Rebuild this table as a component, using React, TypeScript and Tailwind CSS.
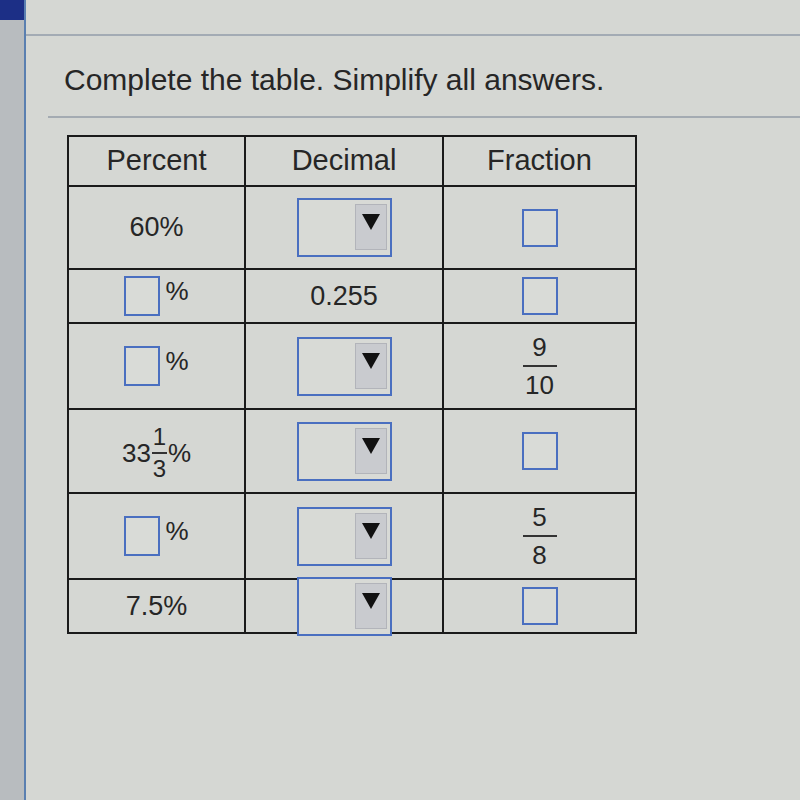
import React from "react";

const Box = ({ w = 36, h = 38 }: { w?: number; h?: number }) => (
  <div className="border-2 border-[#4a6fc0] bg-[#d9dbd7]" style={{ width: w, height: h }} />
);

const Dropdown = () => (
  <div className="w-[95px] h-[59px] border-2 border-[#4a6fc0] bg-[#d8dad6] flex justify-end items-stretch pt-[4px] pr-[3px] pb-[5px]">
    <div className="w-[32px] bg-[#c9cbcf] border border-[#b2b4ba] flex justify-center pt-[8px]">
      <svg width="20" height="18" viewBox="0 0 20 18">
        <polygon points="1,1 19,1 10,17" fill="#111" />
      </svg>
    </div>
  </div>
);

const PctBox = () => (
  <div className="flex items-start gap-[5px]">
    <Box w={36} h={40} />
    <span className="text-[26px] leading-[30px]">%</span>
  </div>
);

const Frac = ({ n, d }: { n: string; d: string }) => (
  <div className="flex flex-col items-center text-[26px] leading-[26px]">
    <span>{n}</span>
    <div className="w-[34px] h-[2px] bg-[#333] my-[5px]" />
    <span>{d}</span>
  </div>
);

const Cell = ({ children, h, last }: { children?: React.ReactNode; h: number; last?: boolean }) => (
  <div
    className={`flex items-center justify-center border-b-2 border-[#1a1a1a] ${last ? "" : "border-r-2"}`}
    style={{ height: h }}
  >
    {children}
  </div>
);

export default function App() {
  const rows: { h: number; cells: React.ReactNode[] }[] = [
    { h: 83, cells: [<span className="text-[27px]">60%</span>, <Dropdown />, <Box />] },
    { h: 54, cells: [<PctBox />, <span className="text-[27px]">0.255</span>, <Box />] },
    { h: 86, cells: [<PctBox />, <Dropdown />, <Frac n="9" d="10" />] },
    {
      h: 84,
      cells: [
        <div className="flex items-center text-[26px] leading-[26px] pt-[4px]">
          <span>33</span>
          <div className="flex flex-col items-center text-[24px] leading-[22px] mx-[1px]">
            <span>1</span>
            <div className="w-[15px] h-[2px] bg-[#333] my-[4px]" />
            <span>3</span>
          </div>
          <span>%</span>
        </div>,
        <Dropdown />,
        <Box />,
      ],
    },
    { h: 86, cells: [<PctBox />, <Dropdown />, <Frac n="5" d="8" />] },
    { h: 54, cells: [<span className="text-[27px]">7.5%</span>, <Dropdown />, <Box />] },
  ];

  return (
    <div
      className="w-[800px] h-[800px] flex bg-[#d5d7d3] text-[#262626] overflow-hidden"
      style={{ fontFamily: '"Liberation Sans", Arial, sans-serif' }}
    >
      <div className="w-[26px] h-full flex flex-col bg-[#b8bcbf] border-r-2 border-[#5a7fb0]">
        <div className="h-[20px] bg-[#1c2f86]" />
      </div>
      <div className="flex-1 flex flex-col">
        <div className="h-[36px] border-b-2 border-[#a3abb4]" />
        <div className="pl-[38px] pt-[27px] text-[30px] leading-[34px]">Complete the table. Simplify all answers.</div>
        <div className="ml-[22px] mt-[19px] h-[2px] bg-[#a4abb2]" />
        <div className="ml-[41px] mt-[17px] w-[570px] border-t-2 border-l-2 border-r-2 border-[#1a1a1a] grid grid-cols-[177px_198px_191px]">
          <Cell h={50}><span className="text-[29px]">Percent</span></Cell>
          <Cell h={50}><span className="text-[29px]">Decimal</span></Cell>
          <Cell h={50} last><span className="text-[29px]">Fraction</span></Cell>
          {rows.map((r, i) =>
            r.cells.map((c, j) => (
              <Cell key={`${i}-${j}`} h={r.h} last={j === 2}>
                {c}
              </Cell>
            ))
          )}
        </div>
      </div>
    </div>
  );
}
